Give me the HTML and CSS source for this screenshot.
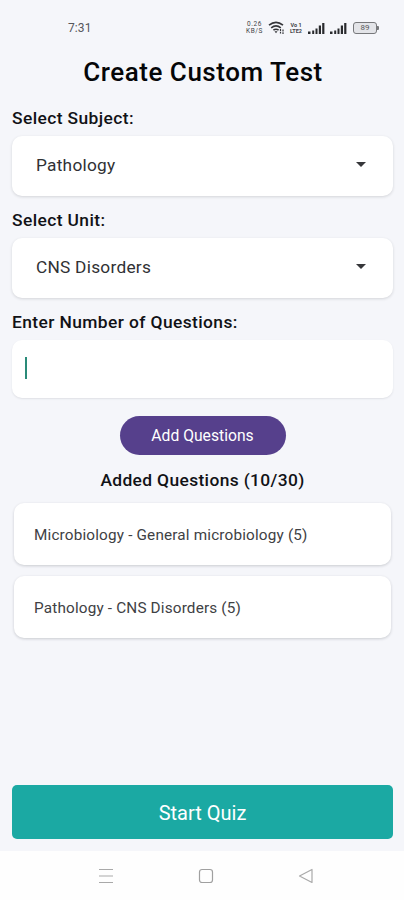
FILE: index.html
```html
<!DOCTYPE html>
<html lang="en">
<head>
<meta charset="utf-8">
<title>Create Custom Test</title>
<link rel="stylesheet" href="styles.css">
</head>
<body>
<div class="screen">
  <header class="status">
    <span class="time">7:31</span>
    <div class="indicators">
      <div class="speed"><span>0.26</span><span>KB/S</span></div>
      <svg class="wifi" width="17" height="14" viewBox="0 0 17 14" fill="none" stroke="#35363a" stroke-width="1.6"><path d="M1 4.2Q8 -1.5 15 4.2M3.2 6.8Q8 2.8 12.8 6.8M5.4 9.2Q8 7.2 10.6 9.2"/><path d="M6.5 10.3h3L8 12.3z" fill="#35363a" stroke="none"/><path d="M12.5 8v4.5M15 8.5v4.5" stroke-width="1.2" stroke-dasharray="2 .8"/></svg>
      <div class="volte"><span>Vo 1</span><span>LTE2</span></div>
      <svg class="signal" width="17" height="12" viewBox="0 0 17 12" fill="#292a2d"><path d="M0 9.500h2.500V12H0zM4.200 8.500h2V12h-2zM7.500 6.500h2V12h-2zM10.800 3.500H13V12h-2.200zM14.200 1h2.200v11h-2.200z"/></svg>
      <svg class="signal" width="17" height="12" viewBox="0 0 17 12" fill="#292a2d"><path d="M0 9.500h2.500V12H0zM4.200 8.500h2V12h-2zM7.500 6.500h2V12h-2zM10.800 3.500H13V12h-2.200zM14.200 1h2.200v11h-2.200z"/></svg>
      <div class="battery">89</div>
    </div>
  </header>
  <main>
    <h1>Create Custom Test</h1>
    <label class="label subject">Select Subject:</label>
    <div class="field select"><span>Pathology</span><i class="caret"></i></div>
    <label class="label unit">Select Unit:</label>
    <div class="field select"><span>CNS Disorders</span><i class="caret"></i></div>
    <label class="label number">Enter Number of Questions:</label>
    <div class="field input"><i class="cursor"></i></div>
    <button class="add"><span>Add Questions</span></button>
    <h2><span>Added Questions (10/30)</span></h2>
    <ul class="list">
      <li><span>Microbiology - General microbiology (5)</span></li>
      <li><span>Pathology - CNS Disorders (5)</span></li>
    </ul>
    <button class="start"><span>Start Quiz</span></button>
  </main>
  <nav>
    <svg width="16" height="16" viewBox="0 0 16 16" fill="none" stroke="#a9a9a9" stroke-width="1.200"><path d="M1 1.500h14M1 8h14M1 14.500h14"/></svg>
    <svg width="16" height="16" viewBox="0 0 16 16" fill="none" stroke="#a0a0a0" stroke-width="1.200"><rect x="1.500" y="1.500" width="13" height="13" rx="2.500"/></svg>
    <svg width="16" height="16" viewBox="0 0 16 16" fill="none" stroke="#a9a9a9" stroke-width="1.200" stroke-linejoin="round"><path d="M14 1.500v13L1.500 8z"/></svg>
  </nav>
</div>
</body>
</html>
```
FILE: styles.css
```css
* { box-sizing: border-box; }
body { margin: 0; font-family: Roboto, "Liberation Sans", sans-serif; color: #111216; }
.screen { width: 404px; height: 900px; background: #f5f6fa; display: flex; flex-direction: column; overflow: hidden; }
.status { height: 52px; padding: 18px 27px 0 68px; display: flex; justify-content: space-between; }
.time { font-size: 12px; line-height: 20px; color: #56575a; letter-spacing: .1px; }
.indicators { display: flex; align-items: center; height: 20px; }
.speed, .volte { display: flex; flex-direction: column; color: #444548; text-align: center; }
.speed span, .volte span { height: 6px; line-height: 6px; }
.speed { width: 19px; font-size: 6.500px; letter-spacing: .6px; }
.speed span { height: 7px; line-height: 7px; }
.volte { width: 14px; font-size: 5.500px; font-weight: 700; margin-left: 4px; }
.wifi { margin-left: 4px; }
.signal { margin-left: 5px; }
.battery { position: relative; margin-left: 6px; width: 24px; height: 12px; border: 1px solid #77787b; border-radius: 3px; background: #e3e4e8; color: #58595c; font-size: 8px; line-height: 10px; text-align: center; }
.battery::after { content: ""; position: absolute; right: -3px; top: 3px; width: 2px; height: 4px; background: #77787b; border-radius: 0 1px 1px 0; }
main { height: 799px; padding: 0 11px 0 12px; display: flex; flex-direction: column; }
h1 { margin: 0; height: 40px; line-height: 40px; font-size: 26px; font-weight: 500; text-align: center; color: #050608; letter-spacing: .53px; padding-left: 1px; }
.label { font-size: 17.400px; font-weight: 500; line-height: 25px; height: 24px; letter-spacing: .4px; }
.subject { margin-top: 14px; margin-bottom: 6px; }
.unit { margin-top: 12px; margin-bottom: 6px; }
.number { margin-top: 12px; margin-bottom: 6px; }
.field { height: 60px; background: #fff; border-radius: 10px; box-shadow: 0 1px 3px rgba(30, 35, 45, .16); display: flex; align-items: center; }
.select { justify-content: space-between; padding: 0 27px 3px 24px; font-size: 17.300px; letter-spacing: .25px; color: #303134; }
.caret { width: 0; height: 0; border: 5px solid transparent; border-top-color: #36373a; border-bottom: 0; }
.input { height: 58px; padding-left: 13px; padding-bottom: 2px; box-shadow: 0 1px 2px rgba(30, 35, 45, .1); }
.cursor { width: 2px; height: 22px; background: #2a8b79; }
button { border: 0; padding: 0; font-family: inherit; color: #fff; flex: none; }
.add { align-self: center; width: 166px; height: 39px; margin-top: 18px; border-radius: 20px; background: #56408c; font-size: 15.700px; }
h2 { margin: 13px 0 0; height: 24px; line-height: 25px; font-size: 17.400px; font-weight: 500; text-align: center; letter-spacing: .36px; }
.list { list-style: none; margin: 11px 2px 0; padding: 0; display: flex; flex-direction: column; gap: 11px; }
.list li { height: 62px; padding: 1px 0 0 20px; background: #fff; border-radius: 10px; box-shadow: 0 1px 3px rgba(30, 35, 45, .2); display: flex; align-items: center; font-size: 15.300px; letter-spacing: .17px; color: #404144; }
.start { margin-top: auto; margin-bottom: 12px; height: 54px; padding-top: 2px; border-radius: 5px; background: #1ba9a3; font-size: 20px; }
nav { flex: 1; background: #fefefe; display: flex; justify-content: center; gap: 84px; padding-top: 17px; padding-left: 7px; }
```
